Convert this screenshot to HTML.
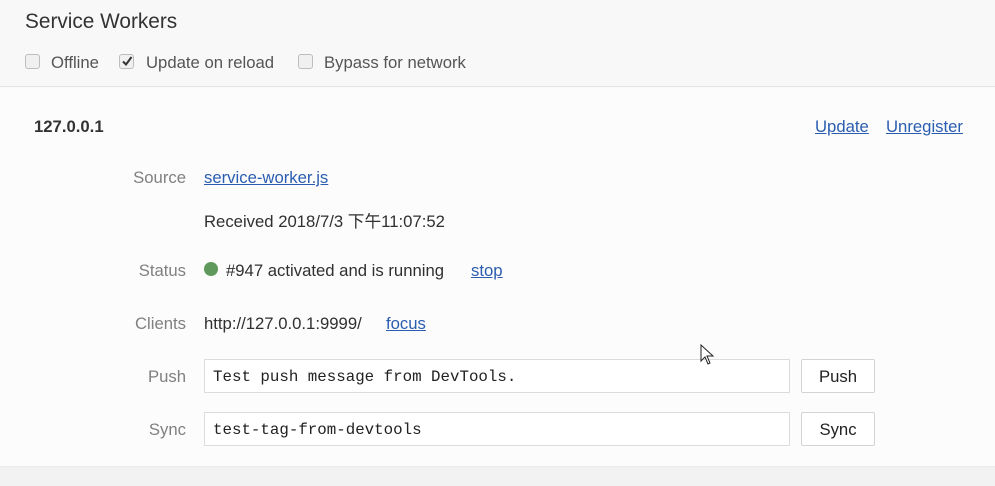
<!DOCTYPE html>
<html><head><meta charset="utf-8"><style>
*{margin:0;padding:0;box-sizing:border-box}
body{width:995px;height:486px;overflow:hidden;background:#fafafa;font-family:"Liberation Sans","Noto Sans CJK SC",sans-serif;font-size:16.7px;color:#303030;position:relative}
.a{position:absolute;white-space:nowrap}
.top{position:absolute;left:0;top:0;width:995px;height:87px;background:#f8f8f8;border-bottom:1px solid #e4e4e4}
.main{position:absolute;left:0;top:88px;width:995px;height:378px;background:#fcfcfc}
.bot{position:absolute;left:0;top:466px;width:995px;height:20px;background:#f2f2f2;border-top:1px solid #ececec}
.cb{position:absolute;width:15px;height:15px;border:1px solid #bdbdbd;border-radius:3px;background:#f0f0f0}
.lbl{position:absolute;right:809px;color:#808080;text-align:right}
a{color:#2a5db0;text-decoration:underline}
.inp{position:absolute;left:204px;width:586px;height:34px;border:1px solid #dcdcdc;background:#fff;font-family:"Liberation Mono",monospace;font-size:15.8px;padding-left:8px;line-height:34px;color:#222}
.btn{position:absolute;left:801px;width:74px;height:34px;border:1px solid #d4d4d4;border-radius:2px;background:#fff;text-align:center;line-height:34px;color:#222}
</style></head><body>
<div class="top"></div><div class="main"></div><div class="bot"></div>
<div class="a" style="left:25px;top:10px;font-size:20.8px;color:#333">Service Workers</div>
<div class="cb" style="left:25px;top:54px"></div>
<div class="a" style="left:51px;top:53px;color:#555">Offline</div>
<div class="cb" style="left:119px;top:54px"></div>
<svg class="a" style="left:120px;top:54px" width="14" height="14"><path d="M3 7.5 L6 10.5 L11.5 3" stroke="#333" stroke-width="2" fill="none"/></svg>
<div class="a" style="left:146px;top:53px;color:#555">Update on reload</div>
<div class="cb" style="left:298px;top:54px"></div>
<div class="a" style="left:324px;top:53px;color:#555">Bypass for network</div>
<div class="a" style="left:34px;top:117px;font-weight:bold;color:#333">127.0.0.1</div>
<div class="a" style="left:815px;top:117px"><a>Update</a></div>
<div class="a" style="left:886px;top:117px"><a>Unregister</a></div>
<div class="lbl a" style="top:168px">Source</div>
<div class="a" style="left:204px;top:168px"><a>service-worker.js</a></div>
<div class="a" style="left:204px;top:208px">Received 2018/7/3 下午11:07:52</div>
<div class="lbl a" style="top:261px">Status</div>
<div class="a" style="left:204px;top:262px;width:14px;height:14px;border-radius:50%;background:#5f9a5c"></div>
<div class="a" style="left:226px;top:261px">#947 activated and is running</div>
<div class="a" style="left:471px;top:261px"><a>stop</a></div>
<div class="lbl a" style="top:314px">Clients</div>
<div class="a" style="left:204px;top:314px">http://127.0.0.1:9999/</div>
<div class="a" style="left:386px;top:314px"><a>focus</a></div>
<div class="lbl a" style="top:367px">Push</div>
<div class="inp" style="top:359px">Test push message from DevTools.</div>
<div class="btn" style="top:359px">Push</div>
<div class="lbl a" style="top:420px">Sync</div>
<div class="inp" style="top:412px">test-tag-from-devtools</div>
<div class="btn" style="top:412px">Sync</div>
<svg class="a" style="left:700px;top:344px" width="16" height="22"><path d="M1 1 L1 17 L5 13 L8 20 L10 19 L7 12 L13 12 Z" fill="#fff" stroke="#222" stroke-width="1"/></svg>
</body></html>
